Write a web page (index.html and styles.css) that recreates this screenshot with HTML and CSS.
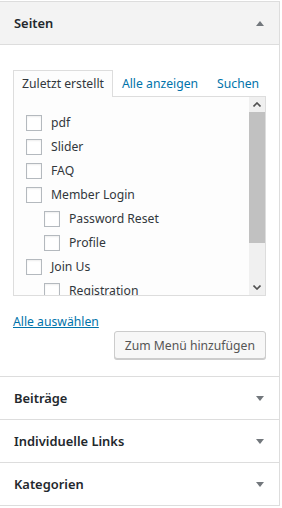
FILE: index.html
```html
<!DOCTYPE html>
<html lang="de">
<head>
  <meta charset="utf-8">
  <title>Menü – Seiten</title>
  <link rel="stylesheet" href="styles.css">
</head>
<body>
  <div class="accordion">

    <!-- Seiten (offen) -->
    <div class="section open">
      <h3 class="section-title">Seiten <span class="arrow up"></span></h3>
      <div class="section-content">
        <ul class="tabs">
          <li class="tab active">Zuletzt erstellt</li>
          <li class="tab"><a href="#">Alle anzeigen</a></li>
          <li class="tab"><a href="#">Suchen</a></li>
        </ul>
        <div class="tabs-panel">
          <ul class="checklist">
            <li><label><input type="checkbox"> pdf</label></li>
            <li><label><input type="checkbox"> Slider</label></li>
            <li><label><input type="checkbox"> FAQ</label></li>
            <li><label><input type="checkbox"> Member Login</label>
              <ul class="children">
                <li><label><input type="checkbox"> Password Reset</label></li>
                <li><label><input type="checkbox"> Profile</label></li>
              </ul>
            </li>
            <li><label><input type="checkbox"> Join Us</label>
              <ul class="children">
                <li><label><input type="checkbox"> Registration</label></li>
              </ul>
            </li>
          </ul>
          <div class="scrollbar">
            <span class="sb-btn">
              <svg width="8" height="5" viewBox="0 0 8 5"><path d="M0.5 4.5 L4 1 L7.5 4.5" fill="none" stroke="#505050" stroke-width="1.6"/></svg>
            </span>
            <div class="sb-track"><div class="sb-thumb"></div></div>
            <span class="sb-btn">
              <svg width="8" height="5" viewBox="0 0 8 5"><path d="M0.5 0.5 L4 4 L7.5 0.5" fill="none" stroke="#505050" stroke-width="1.6"/></svg>
            </span>
          </div>
        </div>
        <div class="controls">
          <a class="select-all" href="#">Alle auswählen</a>
          <div class="add-row">
            <button type="button" class="button">Zum Menü hinzufügen</button>
          </div>
        </div>
      </div>
    </div>

    <!-- Geschlossene Bereiche -->
    <div class="section">
      <h3 class="section-title">Beiträge <span class="arrow"></span></h3>
    </div>
    <div class="section">
      <h3 class="section-title">Individuelle Links <span class="arrow"></span></h3>
    </div>
    <div class="section">
      <h3 class="section-title">Kategorien <span class="arrow"></span></h3>
    </div>

  </div>
</body>
</html>
```

FILE: styles.css
```css
body{
  margin:0;
  background:#fff;
  font-family:"Noto Sans","Open Sans",sans-serif;
  font-size:12.2px;
  color:#32373c;
}
.accordion{
  width:279px;
  margin-top:1px;
  border-top:1px solid #ddd;
  border-right:1px solid #ddd;
  background:#fff;
}
.section{border-bottom:1px solid #ddd;}
.section-title{
  margin:0;
  height:42px;
  display:flex;
  align-items:center;
  justify-content:space-between;
  padding:0 14px;
  font-size:12.9px;
  font-weight:600;
  color:#23282d;
}
.section.open .section-title{
  background:#f3f3f3;
  border-bottom:1px solid #ddd;
}
.arrow{
  width:0;height:0;
  margin-right:1px;
  border-left:4px solid transparent;
  border-right:4px solid transparent;
  border-top:5px solid #72777c;
}
.arrow.up{
  border-top:none;
  border-bottom:5px solid #72777c;
}

.section-content{padding:25px 13px 17px;}

/* tabs */
.tabs{
  list-style:none;
  margin:0;
  padding:0;
  display:flex;
  height:26px;
  align-items:flex-end;
  white-space:nowrap;
}
.tab{line-height:25px;}
.tab.active{
  border:1px solid #ddd;
  border-bottom:none;
  background:#fdfdfd;
  padding:0 8px;
  margin-bottom:-1px;
  height:26px;
  position:relative;
  z-index:1;
}
.tab a{color:#0073aa;text-decoration:none;}
.tab:nth-child(2){margin-left:9px;}
.tab:nth-child(3){margin-left:19px;}

.tabs-panel{
  display:flex;
  height:198px;
  border:1px solid #ddd;
  background:#fdfdfd;
  overflow:hidden;
}
.checklist{
  flex:1;
  list-style:none;
  margin:0;
  padding:14px 0 0 12px;
}
.checklist ul{list-style:none;margin:0;padding:0 0 0 18px;}
.checklist li{line-height:24px;}
.checklist label{display:flex;align-items:center;height:24px;white-space:nowrap;}
.checklist input{
  appearance:none;
  -webkit-appearance:none;
  width:16px;height:16px;
  margin:0 9px 0 0;
  border:1px solid #b4b9be;
  background:#fff;
  box-shadow:inset 0 1px 2px rgba(0,0,0,.07);
}

/* fake scrollbar */
.scrollbar{
  width:16px;
  display:flex;
  flex-direction:column;
  background:#f0f0f0;
}
.sb-btn{height:15px;display:flex;align-items:center;justify-content:center;}
.sb-track{flex:1;}
.sb-thumb{height:131px;background:#c1c1c1;}

/* controls */
.controls{display:flex;flex-direction:column;}
.select-all{
  margin-top:18px;
  line-height:16px;
  color:#0073aa;
  text-decoration:underline;
  align-self:flex-start;
}
.add-row{display:flex;justify-content:flex-end;margin-top:1px;}
.button{
  height:28px;
  padding:0 10px;
  border:1px solid #ccc;
  border-radius:3px;
  background:#f7f7f7;
  box-shadow:0 1px 0 #ccc;
  color:#555;
  font-family:inherit;
  font-size:12.2px;
  cursor:pointer;
}
```
